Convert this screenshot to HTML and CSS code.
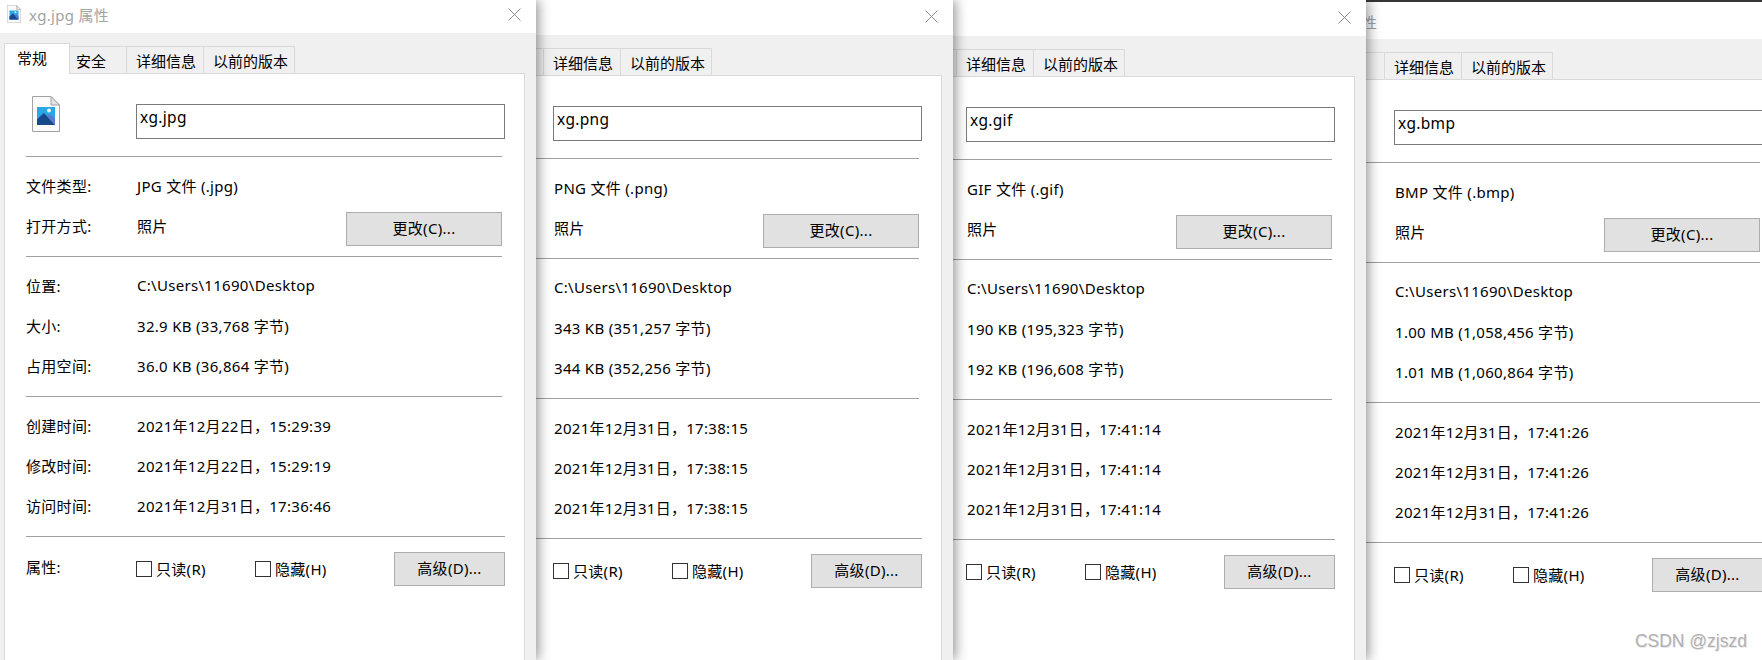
FILE: index.html
```html
<!DOCTYPE html>
<html>
  <head>
    <meta charset="UTF-8" />
    <title>xg 属性</title>
    <link rel="stylesheet" href="styles.css">
  </head>
  <body>
    <svg class="defs" width="0" height="0">
      <symbol id="file-icon" viewBox="0 0 28 36">
        <path d="M.5.5H19L27.5 9V35.5H.5Z" fill="#fbfbfb" stroke="#a3a3a3" />
        <path d="M19 .5V9H27.5Z" fill="#e3e3e3" stroke="#a3a3a3" />
        <rect x="5" y="11" width="18" height="18" fill="#28a9e6" />
        <path d="M5 29V23L11 17L23 27V29Z" fill="#5b7bd0" />
        <path d="M5 29V23.5L12 17L23 29Z" fill="#174a8b" />
        <path d="M15 20L18 18L23 22V29Z" fill="#5b7bd0" />
        <circle cx="17" cy="14.5" r="2" fill="#e8f6fd" />
      </symbol>
    </svg>

    <!-- xg.jpg -->
    <div class="window win-1">
      <div class="titlebar">
        <svg class="title-icon"><use href="#file-icon" /></svg>
        <span class="title-text">xg.jpg 属性</span>
        <svg class="close" viewBox="0 0 13 13"><path d="M.5.5L12.5 12.5M12.5.5L.5 12.5" /></svg>
      </div>
      <div class="tabs">
        <div class="tab tab-active">常规</div>
        <div class="tab tab-security">安全</div>
        <div class="tab tab-details">详细信息</div>
        <div class="tab tab-versions">以前的版本</div>
      </div>
      <div class="panel">
        <div class="name-row">
          <svg class="big-icon"><use href="#file-icon" /></svg>
          <div class="name-box">xg.jpg</div>
        </div>
        <div class="group">
          <div class="row"><span class="label">文件类型:</span><span>JPG 文件 (.jpg)</span></div>
          <div class="row"><span class="label">打开方式:</span><span>照片</span><button class="btn btn-change">更改(C)...</button></div>
        </div>
        <div class="group">
          <div class="row"><span class="label">位置:</span><span>C:\Users\11690\Desktop</span></div>
          <div class="row"><span class="label">大小:</span><span>32.9 KB (33,768 字节)</span></div>
          <div class="row"><span class="label">占用空间:</span><span>36.0 KB (36,864 字节)</span></div>
        </div>
        <div class="group">
          <div class="row"><span class="label">创建时间:</span><span>2021年12月22日，15:29:39</span></div>
          <div class="row"><span class="label">修改时间:</span><span>2021年12月22日，15:29:19</span></div>
          <div class="row"><span class="label">访问时间:</span><span>2021年12月31日，17:36:46</span></div>
        </div>
        <div class="attrs">
          <span class="label">属性:</span>
          <span class="check check-read"><i class="box"></i>只读(R)</span>
          <span class="check"><i class="box"></i>隐藏(H)</span>
          <button class="btn btn-advanced">高级(D)...</button>
        </div>
      </div>
    </div>

    <!-- xg.png -->
    <div class="window win-2">
      <div class="titlebar">
        <span class="title-text title-plain">xg.png 属性</span>
        <svg class="close" viewBox="0 0 13 13"><path d="M.5.5L12.5 12.5M12.5.5L.5 12.5" /></svg>
      </div>
      <div class="tabs">
        <div class="tab tab-spacer"></div>
        <div class="tab tab-details">详细信息</div>
        <div class="tab tab-versions">以前的版本</div>
      </div>
      <div class="panel">
        <div class="name-row"><div class="name-box">xg.png</div></div>
        <div class="group">
          <div class="row"><span class="label"></span><span>PNG 文件 (.png)</span></div>
          <div class="row"><span class="label"></span><span>照片</span><button class="btn btn-change">更改(C)...</button></div>
        </div>
        <div class="group">
          <div class="row"><span class="label"></span><span>C:\Users\11690\Desktop</span></div>
          <div class="row"><span class="label"></span><span>343 KB (351,257 字节)</span></div>
          <div class="row"><span class="label"></span><span>344 KB (352,256 字节)</span></div>
        </div>
        <div class="group">
          <div class="row"><span class="label"></span><span>2021年12月31日，17:38:15</span></div>
          <div class="row"><span class="label"></span><span>2021年12月31日，17:38:15</span></div>
          <div class="row"><span class="label"></span><span>2021年12月31日，17:38:15</span></div>
        </div>
        <div class="attrs">
          <span class="label"></span>
          <span class="check check-read"><i class="box"></i>只读(R)</span>
          <span class="check"><i class="box"></i>隐藏(H)</span>
          <button class="btn btn-advanced">高级(D)...</button>
        </div>
      </div>
    </div>

    <!-- xg.gif -->
    <div class="window win-3">
      <div class="titlebar">
        <span class="title-text title-plain">xg.gif 属性</span>
        <svg class="close" viewBox="0 0 13 13"><path d="M.5.5L12.5 12.5M12.5.5L.5 12.5" /></svg>
      </div>
      <div class="tabs">
        <div class="tab tab-spacer"></div>
        <div class="tab tab-details">详细信息</div>
        <div class="tab tab-versions">以前的版本</div>
      </div>
      <div class="panel">
        <div class="name-row"><div class="name-box">xg.gif</div></div>
        <div class="group">
          <div class="row"><span class="label"></span><span>GIF 文件 (.gif)</span></div>
          <div class="row"><span class="label"></span><span>照片</span><button class="btn btn-change">更改(C)...</button></div>
        </div>
        <div class="group">
          <div class="row"><span class="label"></span><span>C:\Users\11690\Desktop</span></div>
          <div class="row"><span class="label"></span><span>190 KB (195,323 字节)</span></div>
          <div class="row"><span class="label"></span><span>192 KB (196,608 字节)</span></div>
        </div>
        <div class="group">
          <div class="row"><span class="label"></span><span>2021年12月31日，17:41:14</span></div>
          <div class="row"><span class="label"></span><span>2021年12月31日，17:41:14</span></div>
          <div class="row"><span class="label"></span><span>2021年12月31日，17:41:14</span></div>
        </div>
        <div class="attrs">
          <span class="label"></span>
          <span class="check check-read"><i class="box"></i>只读(R)</span>
          <span class="check"><i class="box"></i>隐藏(H)</span>
          <button class="btn btn-advanced">高级(D)...</button>
        </div>
      </div>
    </div>

    <!-- xg.bmp -->
    <div class="window win-4">
      <div class="titlebar">
        <span class="title-text title-plain">xg.bmp 属性</span>
      </div>
      <div class="tabs">
        <div class="tab tab-spacer"></div>
        <div class="tab tab-details">详细信息</div>
        <div class="tab tab-versions">以前的版本</div>
      </div>
      <div class="panel">
        <div class="name-row"><div class="name-box">xg.bmp</div></div>
        <div class="group">
          <div class="row"><span class="label"></span><span>BMP 文件 (.bmp)</span></div>
          <div class="row"><span class="label"></span><span>照片</span><button class="btn btn-change">更改(C)...</button></div>
        </div>
        <div class="group">
          <div class="row"><span class="label"></span><span>C:\Users\11690\Desktop</span></div>
          <div class="row"><span class="label"></span><span>1.00 MB (1,058,456 字节)</span></div>
          <div class="row"><span class="label"></span><span>1.01 MB (1,060,864 字节)</span></div>
        </div>
        <div class="group">
          <div class="row"><span class="label"></span><span>2021年12月31日，17:41:26</span></div>
          <div class="row"><span class="label"></span><span>2021年12月31日，17:41:26</span></div>
          <div class="row"><span class="label"></span><span>2021年12月31日，17:41:26</span></div>
        </div>
        <div class="attrs">
          <span class="label"></span>
          <span class="check check-read"><i class="box"></i>只读(R)</span>
          <span class="check"><i class="box"></i>隐藏(H)</span>
          <button class="btn btn-advanced">高级(D)...</button>
        </div>
      </div>
    </div>

    <div class="watermark">CSDN @zjszd</div>
  </body>
</html>
```

FILE: styles.css
```css
html,
body {
  margin: 0;
  height: 100%;
  overflow: hidden;
}
body {
  position: relative;
  background-color: #444;
  font-family: "Noto Sans", "Noto Sans CJK SC", sans-serif;
  font-size: 15px;
  color: #000;
}
.defs {
  position: absolute;
}

/* windows sit on a desktop, each one overlapping the next */
.window {
  position: absolute;
  bottom: 0;
  display: flex;
  flex-direction: column;
  width: 536px;
  background-color: #f0f0f0;
  box-shadow: 2px 0 12px rgba(0, 0, 0, 0.45);
}
.win-1 {
  left: 0;
  top: 0;
  z-index: 4;
}
.win-2 {
  left: 417px;
  top: 0;
  z-index: 3;
}
.win-3 {
  left: 830px;
  top: 0;
  z-index: 2;
}
.win-4 {
  left: 1258px;
  top: 2px;
  z-index: 1;
}

.titlebar {
  box-sizing: border-box;
  display: flex;
  flex: none;
  align-items: center;
  height: 33px;
  padding-left: 7px;
  padding-bottom: 5px;
  background-color: #fff;
  color: #a3a3a3;
}
.win-2 .titlebar {
  height: 35px;
  padding-bottom: 3px;
}
.win-3 .titlebar {
  height: 36px;
  padding-bottom: 2px;
}
.win-4 .titlebar {
  height: 37px;
  padding-top: 1px;
  padding-bottom: 0;
}
.title-icon {
  width: 14px;
  height: 18px;
  margin-right: 8px;
}
.title-text {
  font-size: 15px;
  letter-spacing: 0.3px;
}
.title-plain {
  margin-left: 22px;
}
.close {
  width: 13px;
  height: 13px;
  margin-left: auto;
  margin-right: 15px;
  fill: none;
  stroke: #8c8c8c;
}

.tabs {
  display: flex;
  flex: none;
  align-items: flex-end;
  height: 40px;
  padding-left: 4px;
}
.tab {
  box-sizing: border-box;
  height: 27px;
  line-height: 28px;
  border: 1px solid #d9d9d9;
  border-bottom: none;
  margin-right: -1px;
  white-space: nowrap;
  font-size: 15px;
}
.tab-active {
  position: relative;
  z-index: 1;
  width: 66px;
  height: 31px;
  margin-bottom: -1px;
  padding-left: 12px;
  line-height: 29px;
  background-color: #fff;
}
.tab-security {
  width: 58px;
  padding-left: 6px;
}
.tab-details {
  width: 78px;
  padding-left: 9px;
}
.tab-versions {
  width: 92px;
  padding-left: 9px;
}
.tab-spacer {
  width: 123px;
}

.panel {
  box-sizing: border-box;
  flex: 1;
  width: 521px;
  margin-left: 4px;
  padding-left: 21px;
  background-color: #fff;
  border: 1px solid #d9d9d9;
  border-bottom: none;
  letter-spacing: 0.3px;
}
.name-row {
  display: flex;
  align-items: flex-start;
  height: 82px;
  padding-top: 30px;
  box-sizing: border-box;
  position: relative;
}
.big-icon {
  position: absolute;
  left: 6px;
  top: 22px;
  width: 28px;
  height: 36px;
}
.name-box {
  box-sizing: border-box;
  flex: none;
  width: 369px;
  height: 35px;
  margin-left: 110px;
  padding-left: 3px;
  line-height: 25px;
  border: 1px solid #7a7a7a;
  font-size: 15.5px;
}
.group {
  width: 476px;
  padding: 10px 0 9px;
  border-top: 1px solid #a0a0a0;
}
.row {
  box-sizing: border-box;
  display: flex;
  align-items: center;
  height: 40px;
  padding-bottom: 4px;
}
.label {
  width: 111px;
  flex: none;
}
.btn {
  box-sizing: border-box;
  height: 34px;
  padding: 0 0 2px;
  background-color: #e1e1e1;
  border: 1px solid #adadad;
  font: inherit;
  letter-spacing: inherit;
  color: inherit;
}
.btn-change {
  width: 156px;
  margin-left: auto;
  margin-top: 7px;
}
.attrs {
  display: flex;
  align-items: center;
  width: 479px;
  height: 64px;
  border-top: 1px solid #a0a0a0;
  box-sizing: border-box;
}
.attrs .label {
  width: 110px;
  margin-top: -5px;
}
.check {
  display: flex;
  align-items: center;
  gap: 4px;
}
.check-read {
  width: 119px;
}
.box {
  box-sizing: border-box;
  width: 16px;
  height: 16px;
  background-color: #fff;
  border: 1px solid #333;
}
.btn-advanced {
  width: 111px;
  margin-left: auto;
}

.watermark {
  position: absolute;
  right: 15px;
  bottom: 8px;
  z-index: 5;
  font-family: "Liberation Sans", sans-serif;
  font-size: 17.5px;
  color: #b0b0b0;
  text-shadow: 1px 1px 1px rgba(0, 0, 0, 0.1);
}
```
